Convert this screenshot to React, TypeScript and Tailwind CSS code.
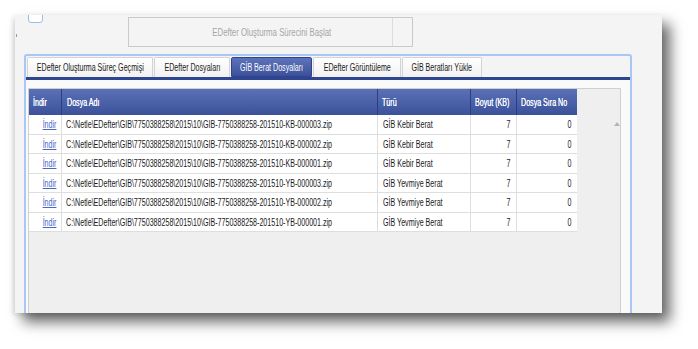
import React from 'react'

const tabs = [
  { label: 'EDefter Oluşturma Süreç Geçmişi', w: 'w-[126px]' },
  { label: 'EDefter Dosyaları', w: 'w-[76px]' },
  { label: 'GİB Berat Dosyaları', w: 'w-[81px]', active: true },
  { label: 'EDefter Görüntüleme', w: 'w-[88px]' },
  { label: 'GİB Beratları Yükle', w: 'w-[80px]' }
]

const rows = [
  { file: 'KB-000003', type: 'GİB Kebir Berat', h: 'h-[20px]' },
  { file: 'KB-000002', type: 'GİB Kebir Berat', h: 'h-[19px]' },
  { file: 'KB-000001', type: 'GİB Kebir Berat', h: 'h-[20px]' },
  { file: 'YB-000003', type: 'GİB Yevmiye Berat', h: 'h-[19px]' },
  { file: 'YB-000002', type: 'GİB Yevmiye Berat', h: 'h-[20px]' },
  { file: 'YB-000001', type: 'GİB Yevmiye Berat', h: 'h-[19px]' }
]

// the screenshot is squeezed sideways, so the text is narrowed with scale-x
function T({ children, at = 'left', className = '' }: { children: React.ReactNode; at?: 'left' | 'center' | 'right'; className?: string }) {
  const origin = at === 'left' ? 'origin-left' : at === 'right' ? 'origin-right' : 'origin-center'
  return <span className={`inline-block whitespace-nowrap scale-x-[0.71] ${origin} ${className}`}>{children}</span>
}

export default function App() {
  return (
    <div className="w-[698px] h-[349px] bg-white overflow-hidden pt-[15px] pl-[15px] font-['Liberation_Sans',Arial,sans-serif]">
      <div className="relative w-[647px] h-[298px] bg-[#f4f4f4] shadow-[8px_9px_13px_rgba(0,0,0,0.6),-2px_2px_5px_rgba(0,0,0,0.12)] overflow-hidden flex flex-col">
        {/* left tick */}
        <div className="absolute left-[1px] top-[19px] w-[1px] h-[3px] bg-[#9a9a9a]" />

        {/* top bar */}
        <div className="h-[39px] flex items-start shrink-0">
          <div className="ml-[13px] -mt-[8px] w-[15px] h-[16px] rounded-[3px] border border-[#9fbbe8] bg-white" />
          <div className="ml-[85px] mt-[2px] w-[285px] h-[30px] border border-[#cacaca] flex relative">
            <div className="flex-1 flex items-center justify-center text-[11px] text-[#a6a6a6] pl-[2px]">
              <T at="center">EDefter Oluşturma Sürecini Başlat</T>
            </div>
            <div className="absolute right-[19px] top-0 bottom-0 w-[1px] bg-[#dcdcdc]" />
          </div>
        </div>

        {/* tab control */}
        <div className="ml-[9px] w-[608px] h-[270px] shrink-0 border-2 border-[#a9c7f5] rounded-t-[3px] flex flex-col bg-[#f4f4f4]">
          <div className="h-[21px] pt-[1px] pl-[1px] flex gap-[1px] items-end">
            {tabs.map((t) =>
              t.active ? (
                <div
                  key={t.label}
                  className={`${t.w} h-[20px] rounded-t-[2px] border border-[#2f448e] bg-gradient-to-b from-[#5d74bb] to-[#3b5099] text-white text-[10px] flex items-center justify-center`}
                >
                  <T at="center">{t.label}</T>
                </div>
              ) : (
                <div
                  key={t.label}
                  className={`${t.w} h-[20px] rounded-t-[2px] border border-b-0 border-[#d3d3d3] bg-gradient-to-b from-white to-[#f1f1f1] text-[#1a1a1a] text-[10px] flex items-center justify-center`}
                >
                  <T at="center">{t.label}</T>
                </div>
              )
            )}
          </div>
          <div className="h-[3px] bg-[#2f4590]" />
          <div className="flex-1 bg-[#fafafa] pt-[8px] pl-[2px] pr-[9px]">
            <div className="relative h-full border border-[#cfcfcf] bg-[#efefef]">
              <div className="w-[548px]">
                {/* header */}
                <div className="flex h-[26px] bg-gradient-to-b from-[#5a71b7] to-[#3c519a] text-white text-[10px] [text-shadow:0_0_0.4px_white]">
                  <div className="w-[33px] flex items-center pl-[4px] border-r border-[#2c3f85]"><T>İndir</T></div>
                  <div className="w-[316px] flex items-center pl-[5px] border-r border-[#2c3f85]"><T>Dosya Adı</T></div>
                  <div className="w-[93px] flex items-center pl-[4px] border-r border-[#2c3f85]"><T>Türü</T></div>
                  <div className="w-[46px] flex items-center pl-[4px] border-r border-[#2c3f85]"><T>Boyut (KB)</T></div>
                  <div className="w-[60px] flex items-center pl-[4px]"><T>Dosya Sıra No</T></div>
                </div>
                {rows.map((r) => (
                  <div key={r.file} className={`flex ${r.h} bg-white border-b border-[#dedede] text-[10px] text-[#1a1a1a]`}>
                    <div className="w-[33px] flex items-center justify-end pr-[5px] border-r border-[#dedede]">
                      <T at="right" className="text-[#4a67c8] underline">İndir</T>
                    </div>
                    <div className="w-[316px] flex items-center pl-[4px] border-r border-[#dedede] overflow-hidden">
                      <T>{`C:\\Netle\\EDefter\\GIB\\7750388258\\2015\\10\\GIB-7750388258-201510-${r.file}.zip`}</T>
                    </div>
                    <div className="w-[93px] flex items-center pl-[5px] border-r border-[#dedede]"><T>{r.type}</T></div>
                    <div className="w-[46px] flex items-center justify-end pr-[5px] border-r border-[#dedede]"><T at="right">7</T></div>
                    <div className="w-[60px] flex items-center justify-end pr-[5px]"><T at="right">0</T></div>
                  </div>
                ))}
              </div>
              {/* scroll arrow */}
              <div className="absolute left-[585px] top-[33px] w-0 h-0 border-l-[3px] border-r-[3px] border-b-[4px] border-l-transparent border-r-transparent border-b-[#b5b5b5]" />
            </div>
          </div>
        </div>
      </div>
    </div>
  )
}
